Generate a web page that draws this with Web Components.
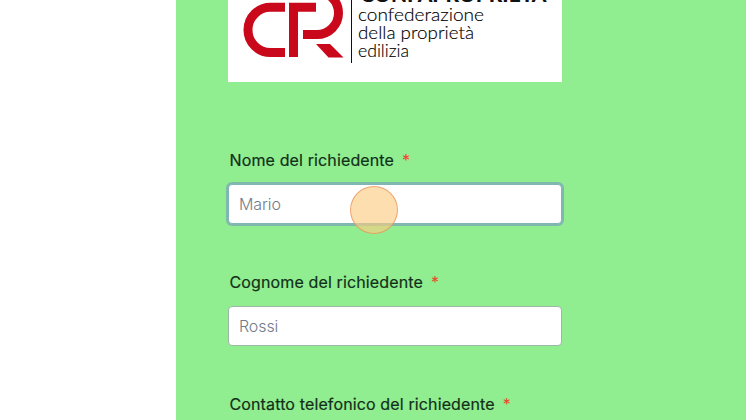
<!DOCTYPE html>
<html lang="it"><head><meta charset="utf-8"><title>Modulo</title>
<style>html,body{margin:0;height:100%;overflow:hidden;background:#fff}</style></head>
<body>
<request-form>
<brand-logo></brand-logo>
<form-field label="Nome del richiedente" hint="Mario" active></form-field>
<form-field label="Cognome del richiedente" hint="Rossi"></form-field>
<form-field label="Contatto telefonico del richiedente" hint=""></form-field>
<click-marker></click-marker>
</request-form>
<script>
class RequestForm extends HTMLElement{
 constructor(){super();this.attachShadow({mode:'open'}).innerHTML=`<style>
 :host{display:block;position:relative;box-sizing:border-box;height:420px;margin-left:176px;padding:0 184px 0 52px;background:#90ee90;overflow:hidden;font-family:Inter,"Liberation Sans",sans-serif}
 </style><slot></slot>`}
}
class BrandLogo extends HTMLElement{
 constructor(){super();this.attachShadow({mode:'open'}).innerHTML=`<style>
 :host{display:block;width:334px;height:82px;margin-bottom:67px;background:#fff}
 svg{display:block}
 .light{font-family:Lato,sans-serif;font-weight:300;font-size:17.5px;fill:#000;stroke:#000;stroke-width:.15px}
 .bold{font-family:Lato,sans-serif;font-weight:900;font-size:20px;fill:#111}
 </style><svg width="334" height="82" viewBox="228 0 334 82">
 <g fill="none" stroke="#c9081b" stroke-width="9">
 <path d="M285 7.3H270.500A22.500 22.500 0 0 0 248 30A22.500 22.500 0 0 0 270.500 52.500H285"/>
 <path d="M293.500 57V7.300H316"/>
 <path d="M303 34.500H317A21.500 21.500 0 0 0 338.500 13A21.500 21.500 0 0 0 317 -8.500"/>
 </g><path d="M316 44H330L343.500 57.500H328.500Z" fill="#c9081b"/>
 <path d="M351.500 0V63" stroke="#111" stroke-width="1"/>
 <text class="bold" x="360.500" y="2" textLength="186" lengthAdjust="spacingAndGlyphs">CONFAPROPRIETA</text>
 <text class="light" x="358" y="21" textLength="126" lengthAdjust="spacingAndGlyphs">confederazione</text>
 <text class="light" x="358" y="39" textLength="116" lengthAdjust="spacingAndGlyphs">della proprietà</text>
 <text class="light" x="358" y="57" textLength="51" lengthAdjust="spacingAndGlyphs">edilizia</text>
 </svg>`}
}
class FormField extends HTMLElement{
 constructor(){super();this.attachShadow({mode:'open'}).innerHTML=`<style>
 :host{display:block;width:334px;height:122px}
 .label{display:flex;gap:8px;height:22px;margin:0 0 13px 1.500px;font-size:16px;line-height:22px;font-weight:400;color:#123018;-webkit-text-stroke:.2px currentColor;white-space:nowrap;letter-spacing:.13px}
 .star{color:#f0432c;-webkit-text-stroke:0}
 .box{box-sizing:border-box;height:40px;border:1px solid #9bb8a5;border-radius:4px;background:#fff;padding:0 10px;line-height:38px;font-size:16px;font-weight:300;letter-spacing:-.1px;color:#737b8a}
 :host([active]) .box{border-color:#7fb5b8;box-shadow:0 0 0 2px #7fb9ad}
 </style><div class="label"><span></span><span class="star">*</span></div><div class="box"></div>`}
 connectedCallback(){
 this.shadowRoot.querySelector('.label span').textContent=this.getAttribute('label');
 this.shadowRoot.querySelector('.box').textContent=this.getAttribute('hint');}
}
class ClickMarker extends HTMLElement{
 constructor(){super();this.attachShadow({mode:'open'}).innerHTML=`<style>
 :host{position:absolute;box-sizing:border-box;left:174px;top:186px;width:48px;height:48px;border:1.500px solid rgba(235,140,85,.7);border-radius:50%;background:rgba(250,203,130,.64)}
 </style>`}
}
customElements.define('request-form',RequestForm);
customElements.define('brand-logo',BrandLogo);
customElements.define('form-field',FormField);
customElements.define('click-marker',ClickMarker);
</script></body></html>
